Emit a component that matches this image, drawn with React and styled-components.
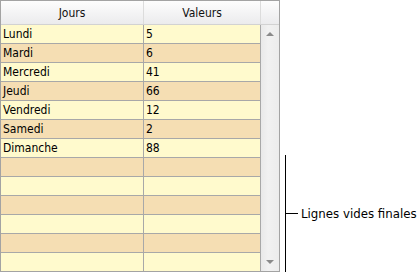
import React from "react";
import styled, { createGlobalStyle } from "styled-components";

const GlobalStyle = createGlobalStyle`
	html, body {
		margin: 0;
		padding: 0;
		background: #ffffff;
	}
`;

const Page = styled.div`
	display: flex;
	align-items: flex-start;
	width: 417px;
	height: 272px;
	overflow: hidden;
`;

const Frame = styled.div`
	width: 278px;
	height: 270px;
	border: 1px solid #a3a3a3;
	display: flex;
	flex-direction: column;
	font-family: "DejaVu Sans Condensed", "DejaVu Sans", sans-serif;
	font-size: 12px;
	color: #000;
`;

const Header = styled.div`
	display: flex;
	height: 23px;
	border-bottom: 1px solid #d2d2d2;
	background: linear-gradient(#fdfdfd, #f4f4f5 50%, #ebebed);
`;

const HeadCell = styled.div`
	width: ${props => props.width}px;
	border-right: ${props => (props.last ? "none" : "1px solid #dcdcdc")};
	display: flex;
	align-items: center;
	justify-content: center;
	color: #111;
`;

const Body = styled.div`
	display: flex;
	flex: 1;
`;

const Rows = styled.div`
	width: 260px;
	display: flex;
	flex-direction: column;
`;

const Row = styled.div`
	display: flex;
	height: 18px;
	border-bottom: 1px solid #a8a8a8;
	background: ${props => (props.odd ? "#f5deb3" : "#fffacd")};

	&:last-child {
		border-bottom: none;
	}
`;

const Cell = styled.div`
	width: ${props => props.width}px;
	border-right: 1px solid #a8a8a8;
	padding-left: 2px;
	box-sizing: border-box;
	line-height: 18px;
	white-space: nowrap;
`;

const Scrollbar = styled.div`
	width: 18px;
	display: flex;
	flex-direction: column;
	justify-content: space-between;
	align-items: center;
	padding: 7px 0 7px;
	box-sizing: border-box;
	background: linear-gradient(to right, #e9e9e9, #f1f1f1 40%, #ececec);
`;

const Arrow = styled.div`
	width: 0;
	height: 0;
	border-left: 4px solid transparent;
	border-right: 4px solid transparent;
	${props =>
		props.down
			? "border-top: 4px solid #8a8a8a;"
			: "border-bottom: 4px solid #8a8a8a;"}
`;

const Note = styled.div`
	margin-left: 5px;
	margin-top: 155px;
	height: 117px;
	border-left: 1px solid #000;
	display: flex;
	align-items: center;
`;

const Tick = styled.div`
	width: 12px;
	height: 1px;
	background: #000;
`;

const NoteLabel = styled.span`
	margin-left: 3px;
	font-family: "DejaVu Sans", sans-serif;
	font-size: 11.8px;
	color: #000;
	white-space: nowrap;
`;

const data = [
	["Lundi", "5"],
	["Mardi", "6"],
	["Mercredi", "41"],
	["Jeudi", "66"],
	["Vendredi", "12"],
	["Samedi", "2"],
	["Dimanche", "88"],
	["", ""],
	["", ""],
	["", ""],
	["", ""],
	["", ""],
	["", ""],
];

export default function App() {
	return (
		<>
			<GlobalStyle />
			<Page>
				<Frame>
					<Header>
						<HeadCell width={143}>Jours</HeadCell>
						<HeadCell width={117}>Valeurs</HeadCell>
						<HeadCell width={18} last />
					</Header>
					<Body>
						<Rows>
							{data.map(([day, value], i) => (
								<Row key={i} odd={i % 2 === 1}>
									<Cell width={143}>{day}</Cell>
									<Cell width={117}>{value}</Cell>
								</Row>
							))}
						</Rows>
						<Scrollbar>
							<Arrow />
							<Arrow down />
						</Scrollbar>
					</Body>
				</Frame>
				<Note>
					<Tick />
					<NoteLabel>Lignes vides finales</NoteLabel>
				</Note>
			</Page>
		</>
	);
}
